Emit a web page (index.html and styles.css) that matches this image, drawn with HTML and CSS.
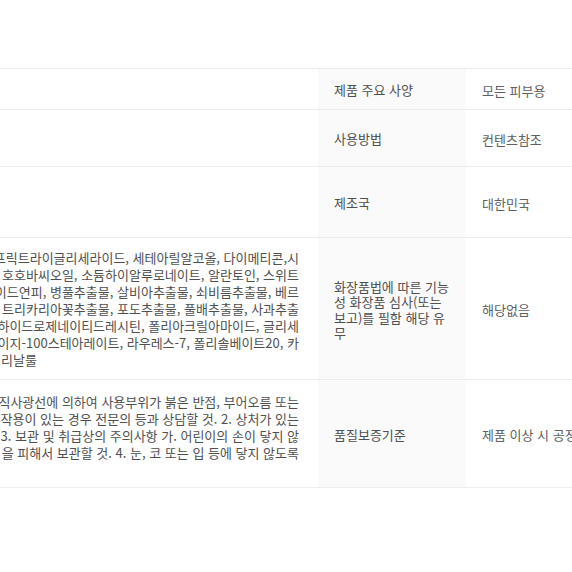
FILE: index.html
```html
<!DOCTYPE html>
<html lang="ko">
<head>
<meta charset="utf-8">
<link rel="stylesheet" href="styles.css">
</head>
<body>
<div class="sheet">
  <div class="spec">
    <div class="row r1">
      <div class="cell val"></div>
      <div class="cell key">제품 주요 사양</div>
      <div class="cell val2">모든 피부용</div>
    </div>
    <div class="row r2">
      <div class="cell val"></div>
      <div class="cell key">사용방법</div>
      <div class="cell val2">컨텐츠참조</div>
    </div>
    <div class="row r3">
      <div class="cell val"></div>
      <div class="cell key">제조국</div>
      <div class="cell val2">대한민국</div>
    </div>
    <div class="row r4">
      <div class="cell val">
        <div class="lines">
          <div class="ln">프릭트라이글리세라이드, 세테아릴알코올, 다이메티콘,시</div>
          <div class="ln">호호바씨오일, 소듐하이알루로네이트, 알란토인, 스위트</div>
          <div class="ln">이드연피, 병풀추출물, 살비아추출물, 쇠비름추출물, 베르</div>
          <div class="ln">트리카리아꽃추출물, 포도추출물, 풀배추출물, 사과추출</div>
          <div class="ln">하이드로제네이티드레시틴, 폴리아크릴아마이드, 글리세</div>
          <div class="ln">이지-100스테아레이트, 라우레스-7, 폴리솔베이트20, 카</div>
          <div class="tail">리날룰</div>
        </div>
      </div>
      <div class="cell key key-multi">화장품법에 따른 기능성 화장품 심사(또는 보고)를 필함 해당 유무</div>
      <div class="cell val2">해당없음</div>
    </div>
    <div class="row r5">
      <div class="cell val val-top">
        <div class="lines">
          <div class="ln">직사광선에 의하여 사용부위가 붉은 반점, 부어오름 또는</div>
          <div class="ln">부작용이 있는 경우 전문의 등과 상담할 것. 2. 상처가 있는</div>
          <div class="ln">3. 보관 및 취급상의 주의사항 가. 어린이의 손이 닿지 않</div>
          <div class="ln">을 피해서 보관할 것. 4. 눈, 코 또는 입 등에 닿지 않도록</div>
        </div>
      </div>
      <div class="cell key">품질보증기준</div>
      <div class="cell val2 nowrap">제품 이상 시 공정</div>
    </div>
  </div>
</div>
</body>
</html>
```

FILE: styles.css
```css
html, body {
  margin: 0;
  padding: 0;
  background: #ffffff;
}

body {
  font-family: "Noto Sans CJK KR", "Noto Sans", sans-serif;
  font-size: 13px;
  color: #555;
}

.sheet {
  width: 572px;
  height: 572px;
  overflow: hidden;
  padding-top: 68px;
  box-sizing: border-box;
}

.spec {
  display: flex;
  flex-direction: column;
  border-bottom: 1px solid #ededed;
}

.row {
  display: grid;
  grid-template-columns: 318px 148px 1fr;
  border-top: 1px solid #ededed;
  box-sizing: border-box;
}

.r1 { height: 41px; }
.r2 { height: 57px; }
.r3 { height: 71px; }
.r4 { height: 142px; }
.r5 { height: 108px; }

.cell {
  display: flex;
  align-items: center;
  min-width: 0;
  overflow: hidden;
}

.val {
  padding-right: 19px;
  color: #505050;
}

.val-top {
  align-items: flex-start;
  padding-top: 13px;
}

.lines {
  width: 100%;
  min-width: 0;
  display: flex;
  flex-direction: column;
}

.ln {
  display: flex;
  justify-content: flex-end;
  white-space: nowrap;
  line-height: 17px;
  height: 17px;
}

.tail {
  display: block;
  text-align: left;
  white-space: nowrap;
  line-height: 17px;
  height: 17px;
  padding-left: 1px;
}

.key {
  background: #fafafa;
  padding: 2px 16px 0;
  color: #505050;
  line-height: 15.5px;
}

.key-multi {
  word-break: break-all;
}

.val2 {
  padding: 2px 0 0 16px;
  color: #606060;
}

.nowrap {
  white-space: nowrap;
}
```
